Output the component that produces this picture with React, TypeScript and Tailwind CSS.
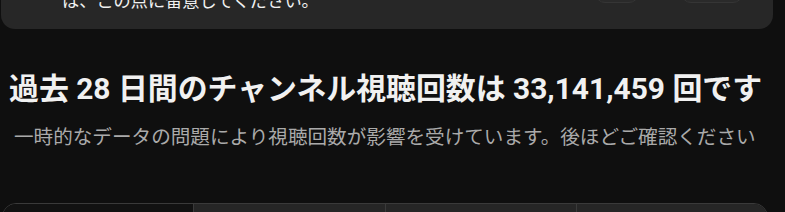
const font = "font-['Roboto','Noto_Sans_CJK_JP',sans-serif]";

export default function App() {
  const tabs = [0, 1, 2, 3];

  return (
    <div className={`w-[785px] h-[212px] overflow-hidden bg-[#0f0f0f] ${font}`}>
      {/* notice card, scrolled mostly out of view */}
      <div className="ml-px w-[772px] -mt-[11px] rounded-b-[14px] bg-[#272727] pl-[61px] pr-[30px] pb-[16px] flex items-start justify-between">
        <p className="text-[17.2px] leading-[24px] text-[#f1f1f1]">
          は、この点に留意してください。
        </p>
        <div className="flex gap-[42px] -mt-[21px]">
          <div className="w-[44px] h-[35px] rounded-[10px] border border-[#353535] bg-[#2a2a2a]" />
          <div className="w-[62px] h-[35px] rounded-[10px] border border-[#353535] bg-[#2a2a2a]" />
        </div>
      </div>

      <h1 className="mt-[40px] pl-[9px] text-[29.9px] leading-[40px] font-bold text-[#f1f1f1] whitespace-nowrap">
        過去 28 日間のチャンネル視聴回数は 33,141,459 回です
      </h1>

      <p className="mt-[16px] pl-[14px] text-[19.6px] leading-[26px] text-[#aaaaaa] whitespace-nowrap">
        一時的なデータの問題により視聴回数が影響を受けています。後ほどご確認ください
      </p>

      {/* tab strip */}
      <div className="mt-[52px] ml-[2px] w-[766px] h-[40px] flex rounded-t-[14px] border border-[#3a3a3a] overflow-hidden">
        {tabs.map((i) => (
          <div
            key={i}
            className={
              i === 0
                ? "flex-1 bg-[#121212]"
                : "flex-1 bg-[#262626] border-l border-[#3a3a3a]"
            }
          />
        ))}
      </div>
    </div>
  );
}
